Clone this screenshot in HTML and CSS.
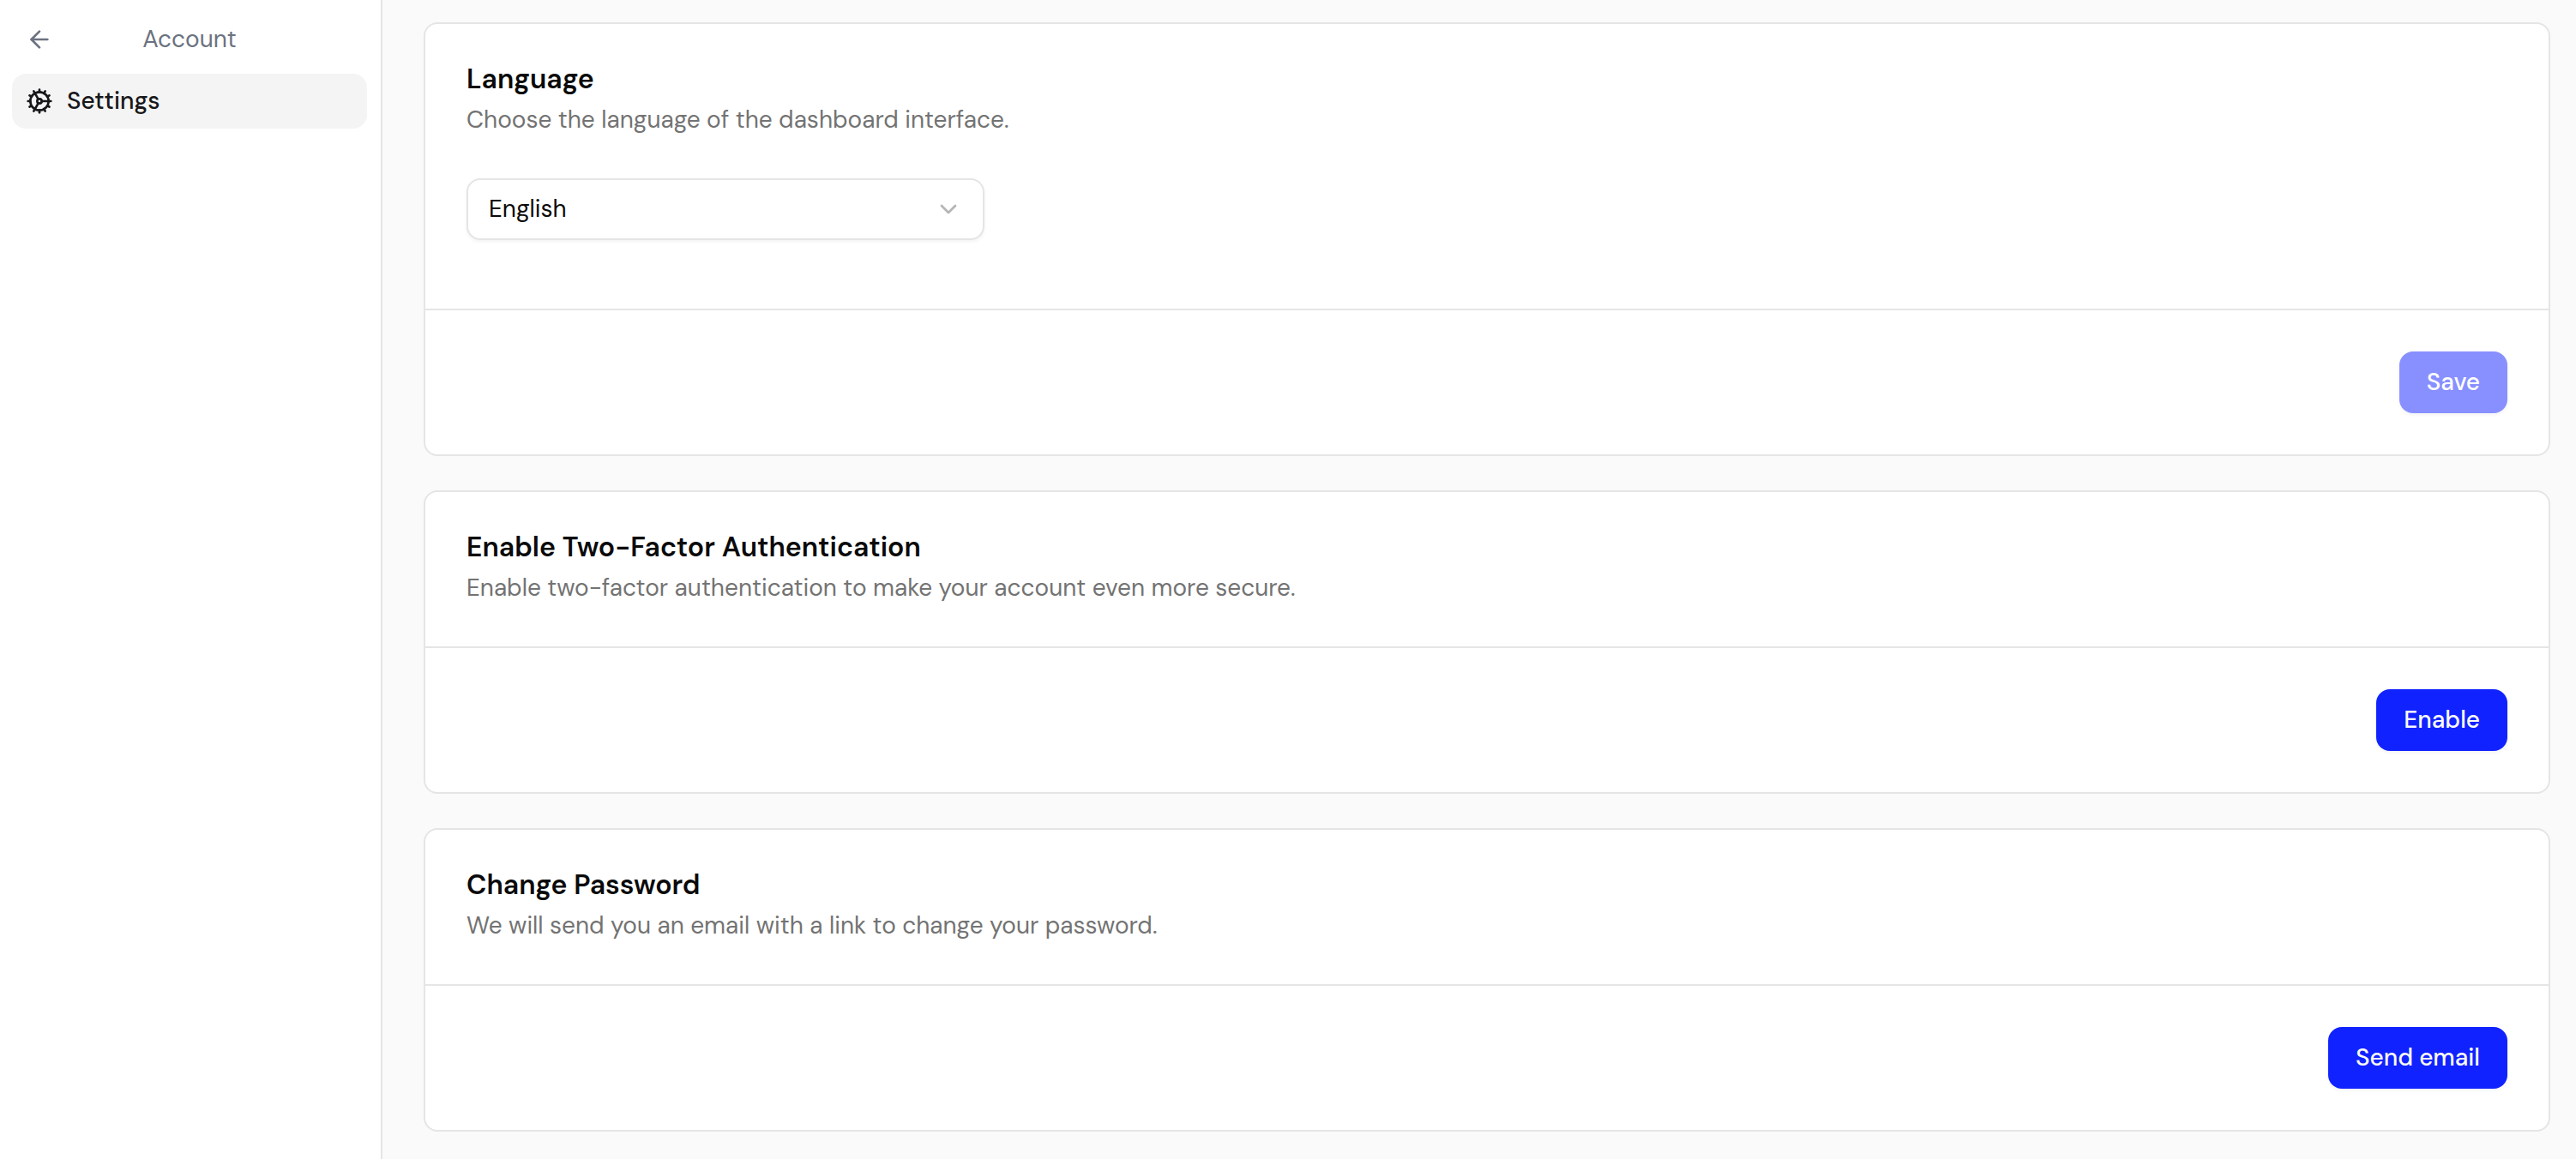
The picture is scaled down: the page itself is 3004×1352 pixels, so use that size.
FILE: index.html
```html
<!DOCTYPE html>
<html lang="en">
<head>
    <meta charset="UTF-8">
    <meta name="viewport" content="width=device-width, initial-scale=1.0">
    <title>Account Settings</title>
    <link rel="stylesheet" href="styles.css">
</head>
<body>
    <aside class="sidebar">
        <div class="sidebar-header">
            <a href="#" class="back-link" aria-label="Back">
                <svg class="icon" viewBox="0 0 24 24">
                    <path d="m12 19-7-7 7-7"/>
                    <path d="M19 12H5"/>
                </svg>
            </a>
            <span class="sidebar-title">Account</span>
        </div>
        <nav>
            <a href="#" class="nav-item active">
                <svg class="icon" viewBox="0 0 24 24">
                    <path d="M12 20a8 8 0 1 0 0-16 8 8 0 0 0 0 16Z"/>
                    <path d="M12 14a2 2 0 1 0 0-4 2 2 0 0 0 0 4Z"/>
                    <path d="M12 2v2"/>
                    <path d="M12 22v-2"/>
                    <path d="m17 20.66-1-1.73"/>
                    <path d="M11 10.27 7 3.34"/>
                    <path d="m20.66 17-1.73-1"/>
                    <path d="m3.34 7 1.73 1"/>
                    <path d="M14 12h8"/>
                    <path d="M2 12h2"/>
                    <path d="m20.66 7-1.73 1"/>
                    <path d="m3.34 17 1.73-1"/>
                    <path d="m17 3.34-1 1.73"/>
                    <path d="m11 13.73-4 6.93"/>
                </svg>
                <span>Settings</span>
            </a>
        </nav>
    </aside>

    <main class="content">
        <section class="card">
            <div class="card-header">
                <h2>Language</h2>
                <p>Choose the language of the dashboard interface.</p>
            </div>
            <div class="card-body">
                <button class="select" type="button">
                    <span>English</span>
                    <svg class="icon chevron" viewBox="0 0 24 24">
                        <path d="m6 9 6 6 6-6"/>
                    </svg>
                </button>
            </div>
            <div class="card-footer">
                <button class="btn" disabled>Save</button>
            </div>
        </section>

        <section class="card">
            <div class="card-header">
                <h2>Enable Two-Factor Authentication</h2>
                <p>Enable two-factor authentication to make your account even more secure.</p>
            </div>
            <div class="card-footer">
                <button class="btn">Enable</button>
            </div>
        </section>

        <section class="card">
            <div class="card-header">
                <h2>Change Password</h2>
                <p>We will send you an email with a link to change your password.</p>
            </div>
            <div class="card-footer">
                <button class="btn">Send email</button>
            </div>
        </section>
    </main>
</body>
</html>
```

FILE: styles.css
```css
* {
    box-sizing: border-box;
}

body {
    display: flex;
    min-height: 100vh;
    margin: 0;
    font-family: "DM Sans", "Open Sans", sans-serif;
    font-size: 28px;
    line-height: 40px;
    color: #0a0a0a;
    background: #fafafa;
}

a {
    color: inherit;
    text-decoration: none;
}

button {
    font: inherit;
    color: inherit;
    cursor: pointer;
}

.icon {
    width: 32px;
    height: 32px;
    flex-shrink: 0;
    fill: none;
    stroke: currentColor;
    stroke-width: 2;
    stroke-linecap: round;
    stroke-linejoin: round;
}

.sidebar {
    width: 446px;
    flex-shrink: 0;
    padding: 14px 16px 14px 14px;
    background: #ffffff;
    border-right: 2px solid #e5e5e5;
}

.sidebar-header {
    display: grid;
    grid-template-columns: 32px 1fr 32px;
    align-items: center;
    height: 64px;
    padding: 0 16px;
    margin-bottom: 8px;
    color: #6b7280;
}

.back-link {
    display: flex;
}

.sidebar-title {
    text-align: center;
}

.nav-item {
    display: flex;
    align-items: center;
    gap: 16px;
    height: 64px;
    padding: 0 16px;
    border-radius: 16px;
}

.nav-item.active {
    font-weight: 500;
    color: #18181b;
    background: #f4f4f4;
}

.content {
    flex: 1;
    display: flex;
    flex-direction: column;
    gap: 40px;
    padding: 26px 30px 32px 48px;
}

.card {
    background: #ffffff;
    border: 2px solid #e5e5e5;
    border-radius: 16px;
}

.card-header {
    padding: 48px;
}

.card-header h2 {
    margin: 0 0 12px;
    font-size: 32px;
    font-weight: 600;
    line-height: 32px;
}

.card-header p {
    margin: 0;
    color: #737373;
}

.card-body {
    padding: 0 48px 80px;
}

.select {
    display: flex;
    align-items: center;
    justify-content: space-between;
    width: 604px;
    height: 72px;
    padding: 0 24px;
    background: #ffffff;
    border: 2px solid #e5e5e5;
    border-radius: 16px;
    box-shadow: 0 2px 4px rgba(0, 0, 0, 0.05);
}

.chevron {
    color: #b5b5b5;
}

.card-footer {
    display: flex;
    justify-content: flex-end;
    padding: 48px;
    border-top: 2px solid #e5e5e5;
}

.btn {
    height: 72px;
    padding: 0 32px;
    border: none;
    border-radius: 16px;
    font-weight: 500;
    color: #fafafa;
    background: #1022ff;
    box-shadow: 0 2px 4px rgba(0, 0, 0, 0.05);
}

.btn:disabled {
    color: #ffffff;
    background: #8890ff;
    cursor: default;
}
```
